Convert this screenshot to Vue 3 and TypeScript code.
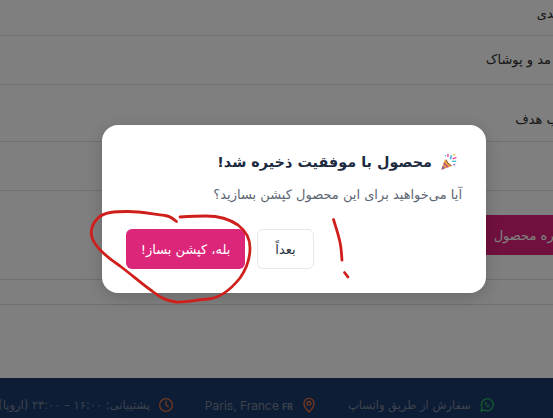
<script setup lang="ts">
interface Row { label: string; cls: string }
const rows: Row[] = [
  { label: 'دسته بندی', cls: 'row-category' },
  { label: 'مد و پوشاک', cls: 'row-value' },
  { label: 'مخاطب هدف', cls: 'row-target' },
  { label: '', cls: 'row-empty' },
]
</script>

<template>
  <div class="page" dir="rtl">
    <main class="content">
      <div v-for="r in rows" :key="r.cls" class="row" :class="r.cls">
        <span class="row-text">{{ r.label }}</span>
      </div>
      <div class="actions">
        <button class="save">ذخیره محصول</button>
      </div>
      <div class="row row-tail"></div>
    </main>

    <footer class="footer">
      <div class="foot-item">
        <svg class="foot-icon" viewBox="0 0 24 24" fill="none" stroke="#25b45c" stroke-width="2" stroke-linecap="round" stroke-linejoin="round">
          <path d="M3 21l1.600-5A9 9 0 1 1 8 19.400z" />
          <path d="M9 9.500c0 3 2.500 5.500 5.500 5.500l1.500-1.500-2-1-1 .8c-1-.4-1.700-1.200-2.100-2.100l.8-1-1-2z" stroke-width="1.300" />
        </svg>
        <span>سفارش از طریق واتساپ</span>
      </div>
      <div class="foot-item">
        <svg class="foot-icon" viewBox="0 0 24 24" fill="none" stroke="#e2703a" stroke-width="2" stroke-linecap="round" stroke-linejoin="round">
          <path d="M12 22.500s7.500-6.500 7.500-13a7.500 7.500 0 0 0-15 0c0 6.500 7.500 13 7.500 13z" />
          <circle cx="12" cy="9.500" r="2.800" />
        </svg>
        <span class="ltr">Paris, France <b class="flag">FR</b></span>
      </div>
      <div class="foot-item">
        <svg class="foot-icon" viewBox="0 0 24 24" fill="none" stroke="#e2703a" stroke-width="2" stroke-linecap="round" stroke-linejoin="round">
          <circle cx="12" cy="12" r="9.500" />
          <path d="M12 6.500V12l3.500 2.500" />
        </svg>
        <span>پشتیبانی: ۱۶:۰۰ – ۲۳:۰۰ (اروپا)</span>
      </div>
    </footer>

    <div class="backdrop">
      <section class="modal">
        <h2 class="title">
          <svg class="popper" viewBox="0 0 20 20" aria-hidden="true">
            <path d="M1.500 18.500 5.500 7l7.500 7.500z" fill="#e9a23b" />
            <path d="M1.500 18.500 3 14.200l2.800 2.800z" fill="#8a5a9e" />
            <path d="M4.400 10.200l5.400 5.400-2 .8-4.200-4.200z" fill="#c2568a" />
            <path d="M7 7.500c.5 3 3 5.500 6 6.500" fill="none" stroke="#7a4a2a" stroke-width="1" />
            <rect x="8" y="1" width="1.600" height="3.400" fill="#e8479a" />
            <rect x="11.500" y="2.500" width="1.600" height="4.500" fill="#3b9fe0" transform="rotate(15 12 4)" />
            <rect x="15" y="1" width="1.800" height="1.800" fill="#f2b632" />
            <rect x="14" y="5" width="4.500" height="1.500" fill="#e8479a" transform="rotate(-20 16 6)" />
            <rect x="13.500" y="8.500" width="4.500" height="1.500" fill="#3ec1d3" />
            <rect x="15" y="12" width="1.800" height="1.800" fill="#7b61d1" />
            <circle cx="6" cy="3" r=".9" fill="#3ec1d3" />
          </svg>
          <span>محصول با موفقیت ذخیره شد!</span>
        </h2>
        <p class="desc">آیا می‌خواهید برای این محصول کپشن بسازید؟</p>
        <div class="buttons">
          <button class="later">بعداً</button>
          <button class="primary">بله، کپشن بساز!</button>
        </div>
      </section>
    </div>

    <svg class="scribble" viewBox="0 0 553 418" fill="none" stroke="#cf1f1c" stroke-width="2.800" stroke-linecap="round" stroke-linejoin="round">
      <path d="M176.500 221.500C172 218 170 216 165 215.500 152 214 140 211.500 128 211.500 115 211.500 104 212 98 218 91 225 90 232 92.500 239 97 249 108 258 120 266 132 275 142 284 152 291 160 297 166 301 176 302 188 302.500 198 299.500 208 299 220 298 232 288 240 278 247 268 250 258 250 248 250 238 246 231 238 225 228 218 218 216 206 216 196 216 188 216.500 180 217" />
      <path d="M333.500 219.500C336 228 339 236 340.500 245 341.500 251 341.500 255 342 260" />
      <path d="M344.500 272.500 348 277" />
    </svg>
  </div>
</template>

<style>
html, body { margin: 0; padding: 0; }
</style>

<style scoped>
.page {
  position: relative;
  width: 553px;
  height: 418px;
  overflow: hidden;
  display: flex;
  flex-direction: column;
  background: #fff;
  font-family: "DejaVu Sans", sans-serif;
  color: #2c2c2c;
}
.content {
  flex: 1;
  min-height: 0;
  display: flex;
  flex-direction: column;
}
.row {
  display: flex;
  align-items: center;
  border-bottom: 1px solid #dcdfe3;
  font-size: 13px;
  white-space: nowrap;
  box-sizing: border-box;
  flex: none;
}
.row-category { height: 36px; padding-bottom: 8px; }
.row-category .row-text { margin-right: -40px; }
.row-value { height: 49px; padding: 0 2px 2px 0; }
.row-target { height: 57px; padding-top: 12px; }
.row-target .row-text { margin-right: -36px; }
.row-empty { height: 49px; }
.row-tail { height: 25px; }
.actions {
  height: 89px;
  box-sizing: border-box;
  padding-top: 24px;
  border-bottom: 1px solid #dcdfe3;
  flex: none;
}
.save {
  display: block;
  margin-right: -45px;
  width: 130px;
  height: 40px;
  border: none;
  background: #e0217c;
  color: #fff;
  font: 13px "DejaVu Sans", sans-serif;
  padding: 0;
}
.footer {
  position: absolute;
  left: 0;
  right: 0;
  bottom: 0;
  height: 40px;
  box-sizing: border-box;
  background: #1a3a6d;
  color: #7a8699;
  font-size: 11.500px;
  display: flex;
  align-items: center;
  padding: 14px 58px 0 0;
  gap: 31px;
  white-space: nowrap;
}
.foot-item { display: flex; align-items: center; gap: 8px; flex: none; }
.foot-icon { width: 16px; height: 16px; flex: none; }
.ltr { direction: ltr; font-family: "Inter", sans-serif; font-size: 12px; }
.flag { font-size: 8.500px; }
.backdrop {
  position: absolute;
  inset: 0;
  background: rgba(0, 0, 0, 0.5);
  display: flex;
  align-items: flex-start;
  justify-content: flex-start;
  padding: 125px 67px 0 0;
  box-sizing: border-box;
}
.modal {
  width: 384px;
  height: 168px;
  box-sizing: border-box;
  background: #fff;
  border-radius: 16px;
  padding: 25px 24px 24px;
  display: flex;
  flex-direction: column;
  box-shadow: 0 4px 16px rgba(0, 0, 0, 0.18);
}
.title {
  margin: 0 4px 0 0;
  height: 24px;
  display: flex;
  align-items: center;
  gap: 8px;
  font-size: 14.400px;
  font-weight: 700;
  color: #1c2a3f;
}
.popper { width: 18px; height: 18px; flex: none; }
.desc {
  margin: 10px 0 0;
  height: 22px;
  line-height: 22px;
  font-size: 13px;
  color: #5d6673;
}
.buttons {
  margin-top: auto;
  display: flex;
  justify-content: flex-end;
  gap: 12px;
}
.later, .primary {
  height: 40px;
  padding: 0;
  border-radius: 6px;
  font: 13px "DejaVu Sans", sans-serif;
}
.later {
  width: 57px;
  background: #fff;
  border: 1px solid #e5e7eb;
  color: #2a3341;
}
.primary {
  width: 119px;
  background: #dc2679;
  border: none;
  color: #fff;
}
.scribble {
  position: absolute;
  inset: 0;
  width: 553px;
  height: 418px;
  pointer-events: none;
}
</style>
